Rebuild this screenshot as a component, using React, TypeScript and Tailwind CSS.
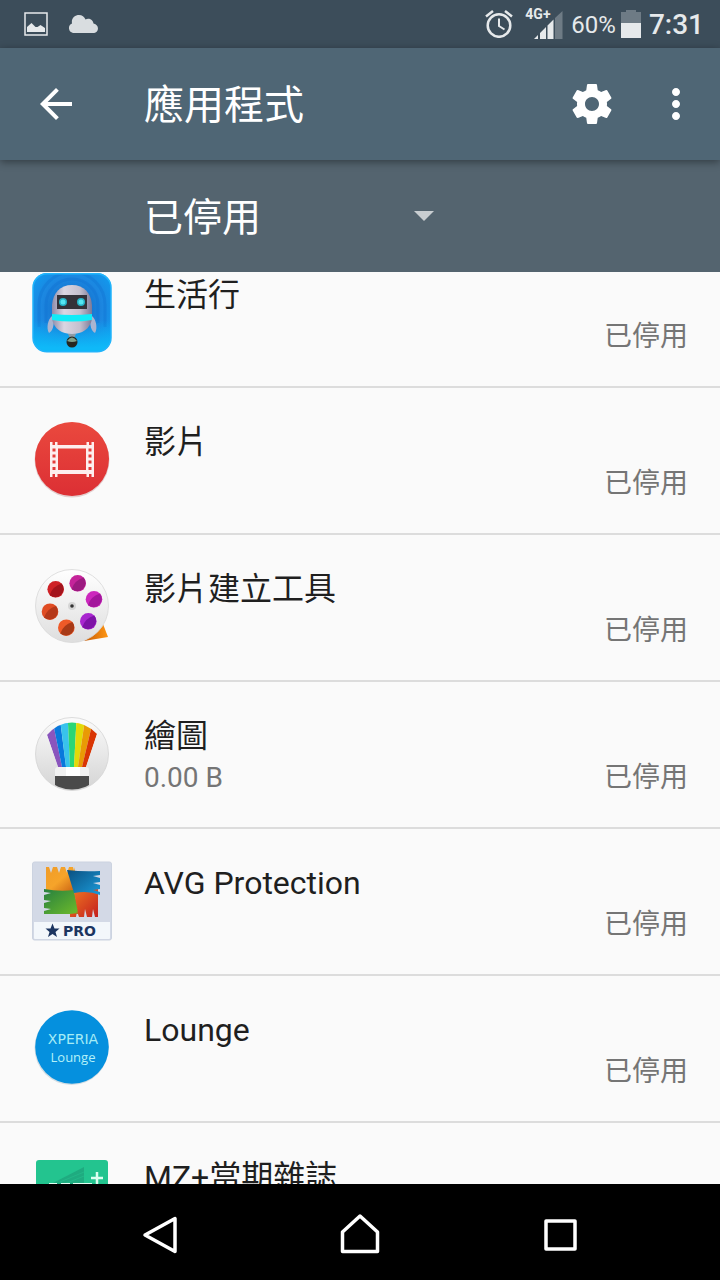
import React from "react";
import { MdArrowBack, MdMoreVert } from "react-icons/md";

const RobotIcon: React.FC = () => (
  <svg viewBox="0 0 80 80" className="size-20">
    <defs>
      <radialGradient id="robot-bg" cx="0.5" cy="0.45" r="0.65">
        <stop offset="0" stopColor="#0c62bd" />
        <stop offset="0.6" stopColor="#1c86e0" />
        <stop offset="1" stopColor="#0f9df0" />
      </radialGradient>
      <linearGradient id="robot-floor" x1="0" y1="0" x2="0" y2="1">
        <stop offset="0.6" stopColor="#0bb4f5" stopOpacity="0" />
        <stop offset="0.95" stopColor="#0fb9f8" />
      </linearGradient>
      <linearGradient id="robot-body" x1="0" y1="0" x2="1" y2="0">
        <stop offset="0" stopColor="#8f8ba8" />
        <stop offset="0.3" stopColor="#dad6e2" />
        <stop offset="0.7" stopColor="#c4bfce" />
        <stop offset="1" stopColor="#7d7996" />
      </linearGradient>
    </defs>
    <rect x="1" y="0" width="78" height="79" rx="14" fill="url(#robot-bg)" />
    <g fill="none" stroke="#0f6fd0" strokeWidth="3" opacity="0.35">
      <path d="M14 50V32a26 26 0 0 1 52 0v18" />
      <path d="M7 54V32a33 33 0 0 1 66 0v22" />
    </g>
    <rect x="1" y="0.750" width="78" height="78" rx="14" fill="url(#robot-floor)" stroke="#20b4fb" strokeWidth="1.500" />
    <path d="M20 43c-4 3-6 12-3 17 4-2 5-8 5-15zM60 43c4 3 6 12 3 17-4-2-5-8-5-15z" fill="#aab4d0" />
    <path d="M40 12c12 0 19 8 20 20v14c-2 10-10 15-20 15s-18-5-20-15V32c1-12 8-20 20-20z" fill="url(#robot-body)" />
    <path d="M25 22h30v14H25z" fill="#34323a" />
    <circle cx="31" cy="29" r="4" fill="#25b3c8" />
    <circle cx="49" cy="29" r="4" fill="#25b3c8" />
    <circle cx="31" cy="29" r="2.500" fill="#55e6f2" />
    <circle cx="49" cy="29" r="2.500" fill="#55e6f2" />
    <path d="M20 41q20 2 40 0v6q-20 3-40 0z" fill="#10ecf8" />
    <path d="M36 61h8l-2 4h-4z" fill="#8d9ba6" />
    <circle cx="40" cy="69" r="5.500" fill="#252721" />
    <path d="M35 68q5-7 10 0-5 2-10 0z" fill="#7fa08a" />
  </svg>
);

const MovieIcon: React.FC = () => (
  <svg viewBox="0 0 80 80" className="size-20">
    <defs>
      <linearGradient id="movie-bg" x1="0" y1="0" x2="0" y2="1">
        <stop offset="0" stopColor="#ea493e" />
        <stop offset="1" stopColor="#dc2f34" />
      </linearGradient>
    </defs>
    <circle cx="40" cy="40" r="37.5" fill="#e3cfcf" />
    <circle cx="40" cy="39" r="37" fill="url(#movie-bg)" />
    <path
      fillRule="evenodd"
      fill="#fdeeee"
      d="M18 22h2.500v3h2.500v-3h2.500v3H54.500v-3H57v3h2.500v-3H62v35h-2.500v-3H57v3h-2.500v-3H25.500v3H23v-3h-2.500v3H18zM26 28.500v21.500h28V28.500zM20.500 28.500v3h3v-3zm0 6v3h3v-3zm0 6v3h3v-3zm0 6.500v3h3v-3zM56.500 28.500v3h3v-3zm0 6v3h3v-3zm0 6v3h3v-3zm0 6.500v3h3v-3z"
    />
  </svg>
);

const reels = [
  { x: 23.7, y: 22.3, light: "#cf2227", dark: "#a3141d" },
  { x: 45.7, y: 16.3, light: "#c5249a", dark: "#9c1a80" },
  { x: 62, y: 32.3, light: "#cc28bd", dark: "#a3169c" },
  { x: 56.3, y: 54.3, light: "#a826cf", dark: "#7d12a6" },
  { x: 34.3, y: 60.7, light: "#ee5a28", dark: "#a83a17" },
  { x: 18, y: 44.7, light: "#e04c23", dark: "#b53819" },
];

const ReelIcon: React.FC = () => (
  <svg viewBox="0 0 80 80" className="size-20">
    <defs>
      <linearGradient id="reel-bg" x1="0" y1="0" x2="0" y2="1">
        <stop offset="0" stopColor="#ffffff" />
        <stop offset="1" stopColor="#dedede" />
      </linearGradient>
      <linearGradient id="reel-tail" x1="0" y1="0" x2="1" y2="0">
        <stop offset="0" stopColor="#c65a05" />
        <stop offset="1" stopColor="#ff9613" />
      </linearGradient>
    </defs>
    <path d="M71 57l5 13-24 4z" fill="url(#reel-tail)" />
    <circle cx="40" cy="39" r="36.500" fill="url(#reel-bg)" stroke="#d8d8d8" strokeWidth="0.800" />
    {reels.map((reel) => (
      <g key={reel.light}>
        <circle cx={reel.x} cy={reel.y} r="8.300" fill={reel.light} />
        <path
          d="M-6 5.700A8.300 8.300 0 0 0 6 -5.700Q-3 -3 -6 5.700z"
          transform={`translate(${reel.x} ${reel.y})`}
          fill={reel.dark}
        />
      </g>
    ))}
    <circle cx="40" cy="39" r="4" fill="#d6d6d6" />
    <circle cx="40" cy="39" r="1.800" fill="#333333" />
  </svg>
);

const SketchIcon: React.FC = () => (
  <svg viewBox="0 0 80 80" className="size-20">
    <defs>
      <linearGradient id="sketch-bg" x1="0" y1="0" x2="0" y2="1">
        <stop offset="0" stopColor="#fbfbfb" />
        <stop offset="1" stopColor="#d4d4d4" />
      </linearGradient>
      <clipPath id="sketch-fan">
        <path d="M15 21Q26 8.500 40 8.500T65 20L54 53H26z" />
      </clipPath>
      <clipPath id="sketch-circle">
        <circle cx="40" cy="39.500" r="36" />
      </clipPath>
    </defs>
    <circle cx="40" cy="40" r="36.500" fill="url(#sketch-bg)" stroke="#d4d4d4" strokeWidth="0.800" />
    <g clipPath="url(#sketch-fan)">
      <path d="M9.500 5H20.200L30 53H26z" fill="#8a55bd" />
      <path d="M20.200 5H28L34 53H30z" fill="#0878dc" />
      <path d="M28 5H35.800L38 53H34z" fill="#38c3ec" />
      <path d="M35.800 5H44.500L42 53H38z" fill="#2bd675" />
      <path d="M44.500 5H53L46 53H42z" fill="#e2da08" />
      <path d="M53 5H61.400L50 53H46z" fill="#e99a05" />
      <path d="M61.400 5H70L54 53H50z" fill="#d93504" />
    </g>
    <g clipPath="url(#sketch-circle)">
      <path d="M23 62v-6q0-3 3-3h28q3 0 3 3v6z" fill="#f1f1f1" />
      <path d="M34 53h14v9H34z" fill="#ffffff" />
      <path d="M23 62h34v18H23z" fill="#4a4a4a" />
    </g>
  </svg>
);

const AvgIcon: React.FC = () => (
  <svg viewBox="0 0 80 80" className="size-20">
    <defs>
      <linearGradient id="avg-orange" x1="0" y1="0" x2="1" y2="1">
        <stop offset="0" stopColor="#f09c28" />
        <stop offset="0.5" stopColor="#f6a42a" />
        <stop offset="1" stopColor="#c85f12" />
      </linearGradient>
      <linearGradient id="avg-blue" x1="0" y1="0" x2="1" y2="1">
        <stop offset="0" stopColor="#0a4f80" />
        <stop offset="1" stopColor="#1b9ad8" />
      </linearGradient>
      <linearGradient id="avg-green" x1="0" y1="0" x2="1" y2="1">
        <stop offset="0" stopColor="#27803f" />
        <stop offset="1" stopColor="#6fbc2a" />
      </linearGradient>
      <linearGradient id="avg-red" x1="0" y1="0" x2="1" y2="1">
        <stop offset="0" stopColor="#f07c21" />
        <stop offset="1" stopColor="#c5201f" />
      </linearGradient>
    </defs>
    <rect x="0.500" y="1" width="79" height="78" rx="2" fill="#d3d9e6" stroke="#ccd3e0" />
    <path d="M2 61h76v16q0 1-1 1H3q-1 0-1-1z" fill="#f3f7fb" />
    <path d="M14 6h3l2 6 2-6h4l2 6 2-6h4l2 6 2-6h4l1 4 1-4v25H14z" fill="url(#avg-orange)" />
    <path d="M12 28q16 3 30 1l5 24H12v-3l7-2-7-1v-5l7-2-7-1v-5l7-2-7-1z" fill="url(#avg-green)" />
    <path d="M42 31l24-4v29h-3l-2-8-1 8h-5l-2-8-1 8h-5l-2-6-1 6h-6v-3l8-1z" fill="url(#avg-red)" />
    <path d="M35 9q16 2 33 1v4l-7 1 7 2v4l-7 1 7 2v4l-7 1 7 2v3q-12-5-26-2z" fill="url(#avg-blue)" />
    <path d="M20.500 62.500l2 5h5l-4 3.500 1.500 5-4.500-3-4.500 3 1.500-5-4-3.500h5z" fill="#1c3560" />
    <text x="31" y="75" className="fill-[#1c3560] font-['DejaVu_Sans'] text-[14px] font-bold">
      PRO
    </text>
  </svg>
);

const LoungeIcon: React.FC = () => (
  <svg viewBox="0 0 80 80" className="size-20">
    <circle cx="39.500" cy="40" r="37" fill="#d3dde3" />
    <circle cx="40" cy="39" r="36.800" fill="#0590de" />
    <text x="41" y="36" textAnchor="middle" className="fill-[#a5ecf6] font-['DejaVu_Sans'] text-[14px]">
      XPERIA
    </text>
    <text x="41" y="54" textAnchor="middle" className="fill-[#b4f0f8] font-['Open_Sans'] text-[13px]">
      Lounge
    </text>
  </svg>
);

const MagazineIcon: React.FC = () => (
  <svg viewBox="0 0 80 80" className="size-20">
    <rect x="4" y="5" width="72" height="71" rx="3" fill="#23c48f" />
    <path d="M19 29L52 12v18H19z" fill="#1fab80" />
    <path d="M28 27l24-10M30 30l22-9" stroke="#23b888" strokeWidth="1" />
    <path d="M65 17v12M59 23h12" stroke="#dcfff0" strokeWidth="2.500" />
    <path d="M17 28h8v2h4v-2h9v2h3v-2h19v30H17z" fill="#e4fff4" />
  </svg>
);

type App = {
  name: string;
  size?: string;
  icon: React.ReactNode;
};

const apps: App[] = [
  { name: "生活行", icon: <RobotIcon /> },
  { name: "影片", icon: <MovieIcon /> },
  { name: "影片建立工具", icon: <ReelIcon /> },
  { name: "繪圖", size: "0.00 B", icon: <SketchIcon /> },
  { name: "AVG Protection", icon: <AvgIcon /> },
  { name: "Lounge", icon: <LoungeIcon /> },
  { name: "MZ+當期雜誌", icon: <MagazineIcon /> },
];

const StatusBar: React.FC = () => (
  <div className="flex h-12 shrink-0 items-center bg-[#3c4d5a] pr-4 pl-6 text-[#e6e9eb]">
    {/* Notifications */}
    <svg viewBox="0 0 24 24" className="size-6">
      <path d="M1 1h22v22H1z" fill="none" stroke="currentColor" strokeWidth="1.500" />
      <path d="M3 20v-5l4.500-4 4 4h2l3-2 4.500 3V20z" fill="currentColor" />
    </svg>
    <svg viewBox="0 0 30 20" className="ml-5 h-5 w-[30px] text-[#d9dde0]">
      <path
        d="M5 19a5 5 0 0 1-1-9.500C3 4 7 1 11 1c3 0 5.500 2 6.500 4.500C21 3.500 25 6 25.500 9.500 32 11 31 19 25 19z"
        fill="currentColor"
      />
    </svg>

    {/* System state */}
    <div className="ml-auto flex items-center">
      <svg viewBox="0 0 28 28" className="size-7" fill="none" stroke="currentColor" strokeWidth="2.500">
        <circle cx="14" cy="15.500" r="11.300" />
        <path d="M14 8.500v7.500l5.500 3.500" strokeWidth="2" />
        <path d="M1 6.500L8 1M27 6.500L20 1" />
      </svg>
      <div className="relative ml-3 h-8 w-[38px]">
        <svg viewBox="0 0 38 32" className="h-8 w-[38px]" fill="currentColor">
          <path d="M9 31l4-4v4zM15 25l6-6v12h-6zM22.500 17.500l6-6V31h-6z" />
          <path d="M30 10l7.500-7V31H30z" opacity="0.300" />
        </svg>
        <span className="absolute top-0 left-0 text-[14px] leading-3 font-bold">4G+</span>
      </div>
      <span className="ml-2 pt-0.5 text-2xl leading-8">60%</span>
      <svg viewBox="0 0 20 30" className="ml-[5px] h-[30px] w-5" fill="currentColor">
        <path d="M5 1h10v2h5v11H0V3h5z" opacity="0.300" />
        <path d="M0 14h20v15H0z" />
      </svg>
      <span className="ml-2 pt-0.5 text-[28px] leading-8 font-medium">7:31</span>
    </div>
  </div>
);

const AppBar: React.FC = () => (
  <header className="relative z-10 flex h-28 shrink-0 items-center bg-[#4f6675] pr-5 pl-8 text-white shadow-[0_2px_8px_rgba(0,0,0,0.4)]">
    <button type="button" aria-label="返回">
      <MdArrowBack className="size-12" />
    </button>
    <h1 className="ml-16 flex-1 pt-1 text-[40px] leading-[48px]">應用程式</h1>
    <button type="button" aria-label="設定">
      <svg viewBox="0 0 24 24" className="size-12" fill="currentColor">
        <path d="M19.430 12.980c.04-.32.070-.64.070-.980s-.03-.66-.07-.98l2.110-1.650c.19-.15.240-.42.120-.64l-2-3.460c-.12-.22-.39-.3-.61-.22l-2.490 1c-.52-.4-1.080-.73-1.690-.98l-.38-2.650C14.460 2.180 14.250 2 14 2h-4c-.25 0-.46.180-.49.420l-.38 2.650c-.61.250-1.170.590-1.690.98l-2.490-1c-.23-.09-.49 0-.61.220l-2 3.460c-.13.220-.07.490.12.640l2.110 1.650c-.04.320-.07.650-.07.980s.030.660.070.98l-2.110 1.650c-.19.150-.24.420-.12.640l2 3.460c.12.220.39.300.61.220l2.490-1c.52.400 1.080.730 1.690.98l.38 2.650c.03.240.24.420.49.420h4c.25 0 .46-.18.490-.42l.38-2.650c.61-.25 1.170-.59 1.690-.98l2.490 1c.23.090.49 0 .61-.22l2-3.460c.12-.22.070-.49-.12-.64l-2.110-1.650zM12 15.500c-1.930 0-3.500-1.570-3.500-3.500s1.570-3.500 3.500-3.500 3.500 1.570 3.500 3.500-1.570 3.500-3.500 3.500z" />
      </svg>
    </button>
    <button type="button" aria-label="更多選項" className="ml-9">
      <MdMoreVert className="size-12" />
    </button>
  </header>
);

const FilterBar: React.FC = () => (
  <div className="flex h-28 shrink-0 items-center bg-[#54646f] pl-36 text-white">
    <div className="relative w-[304px]">
      <select
        aria-label="篩選"
        defaultValue="disabled"
        className="w-full appearance-none bg-transparent pt-1 text-[39px] leading-[56px]"
      >
        <option value="disabled">已停用</option>
      </select>
      <svg viewBox="0 0 20 10" className="pointer-events-none absolute top-[25px] right-[14px] h-[10px] w-5">
        <path d="M0 0h20L10 10z" fill="#c9ced1" />
      </svg>
    </div>
  </div>
);

const AppRow: React.FC<{ app: App }> = ({ app }) => (
  <li className="flex border-b-2 border-[#dcdcdc] px-8 pt-8 pb-[29px]">
    {app.icon}
    <div className="ml-8 flex-1">
      <h2 className="text-[32px] leading-[44px] text-[#1f1f1f]">{app.name}</h2>
      <div className="flex h-10 justify-between text-[28px] leading-10 text-[#757575]">
        <span>{app.size}</span>
        <span>已停用</span>
      </div>
    </div>
  </li>
);

const NavBar: React.FC = () => (
  <nav className="h-24 shrink-0 bg-black pt-1 text-white">
    <div className="mx-auto grid h-full max-w-[600px] grid-cols-3 place-items-center">
      <button type="button" aria-label="返回">
        <svg viewBox="0 0 40 40" className="size-10" fill="none" stroke="currentColor" strokeWidth="3.500" strokeLinejoin="round">
          <path d="M5 21L35 4.500v33z" />
        </svg>
      </button>
      <button type="button" aria-label="主畫面">
        <svg viewBox="0 0 40 40" className="size-10" fill="none" stroke="currentColor" strokeWidth="3.500" strokeLinejoin="round">
          <path d="M20 2L37.500 18V37.500H2.500V18z" />
        </svg>
      </button>
      <button type="button" aria-label="最近使用">
        <svg viewBox="0 0 40 40" className="size-10" fill="none" stroke="currentColor" strokeWidth="3.500" strokeLinejoin="round">
          <path d="M6 7h29v28H6z" />
        </svg>
      </button>
    </div>
  </nav>
);

const App: React.FC = () => {
  return (
    <div
      lang="zh-Hant"
      className="flex h-screen flex-col overflow-hidden bg-[#fafafa] font-['Roboto','Noto_Sans_CJK_TC',sans-serif]"
    >
      <StatusBar />
      <AppBar />
      <FilterBar />
      {/* List, scrolled down a little */}
      <main className="min-h-0 flex-1 overflow-hidden">
        <ul className="-mt-[31px]">
          {apps.map((app) => (
            <AppRow key={app.name} app={app} />
          ))}
        </ul>
      </main>
      <NavBar />
    </div>
  );
};

export default App;
